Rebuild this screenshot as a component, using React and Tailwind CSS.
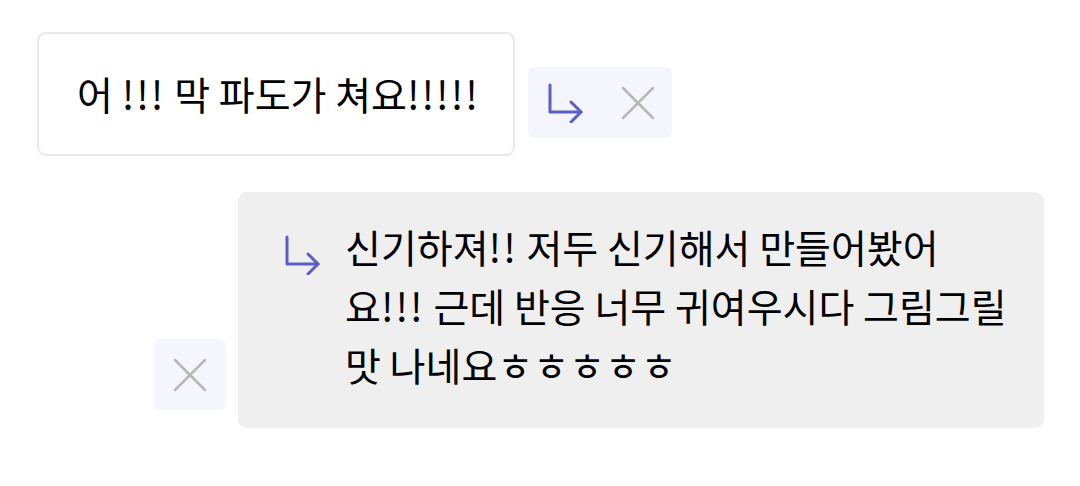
import React from "react";

const font = { fontFamily: '"Noto Sans CJK KR", "Noto Sans", sans-serif' };

function ArrowIcon({ className }) {
  return (
    <svg className={className} viewBox="0 0 36 40" fill="none" stroke="#5d5dc6" strokeWidth="3" strokeLinecap="round" strokeLinejoin="round">
      <path d="M2 2 V 29 H 33" />
      <path d="M23 19 L 33 29 L 23 39" />
    </svg>
  );
}

function XIcon({ className }) {
  return (
    <svg className={className} viewBox="0 0 34 34" fill="none" stroke="#b8b8b8" strokeWidth="2.5" strokeLinecap="round">
      <path d="M2 2 L32 32" />
      <path d="M32 2 L2 32" />
    </svg>
  );
}

function Bang({ children }) {
  return <span className="tracking-[2px]">{children}</span>;
}

export default function App() {
  return (
    <div className="w-[1080px] h-[486px] bg-white flex flex-col text-black" style={font}>
      <div className="flex items-start pl-[37px] pt-[32px] gap-[13px]">
        <div className="w-[478px] h-[124px] border-2 border-[#e8e8e8] rounded-[9px] bg-white flex items-center pl-[38px] pb-[2px] text-[39px] leading-none whitespace-nowrap">
          <span>
            어 <Bang>!!!</Bang> 막 파도가 쳐요<Bang>!!!!!</Bang>
          </span>
        </div>
        <div className="mt-[35px] w-[144px] h-[71px] rounded-[6px] bg-[#f5f5fd] flex items-center pl-[20px] gap-[37px]">
          <ArrowIcon className="w-[36px] h-[40px]" />
          <XIcon className="w-[34px] h-[34px]" />
        </div>
      </div>
      <div className="flex items-end pl-[154px] mt-[36px] gap-[12px]">
        <div className="mb-[18px] w-[72px] h-[71px] rounded-[6px] bg-[#f5f5fd] flex items-center justify-center">
          <XIcon className="w-[34px] h-[34px]" />
        </div>
        <div className="w-[806px] h-[236px] rounded-[9px] bg-[#efefef] flex items-start pl-[47px] pt-[25px] gap-[24px]">
          <ArrowIcon className="w-[36px] h-[40px] mt-[18px]" />
          <div className="text-[39px] leading-[59px] whitespace-nowrap">
            <div>신기하져<Bang>!!</Bang> 저두 신기해서 만들어봤어</div>
            <div>요<Bang>!!!</Bang> 근데 반응 너무 귀여우시다 그림그릴</div>
            <div>맛 나네요ㅎㅎㅎㅎㅎ</div>
          </div>
        </div>
      </div>
    </div>
  );
}
